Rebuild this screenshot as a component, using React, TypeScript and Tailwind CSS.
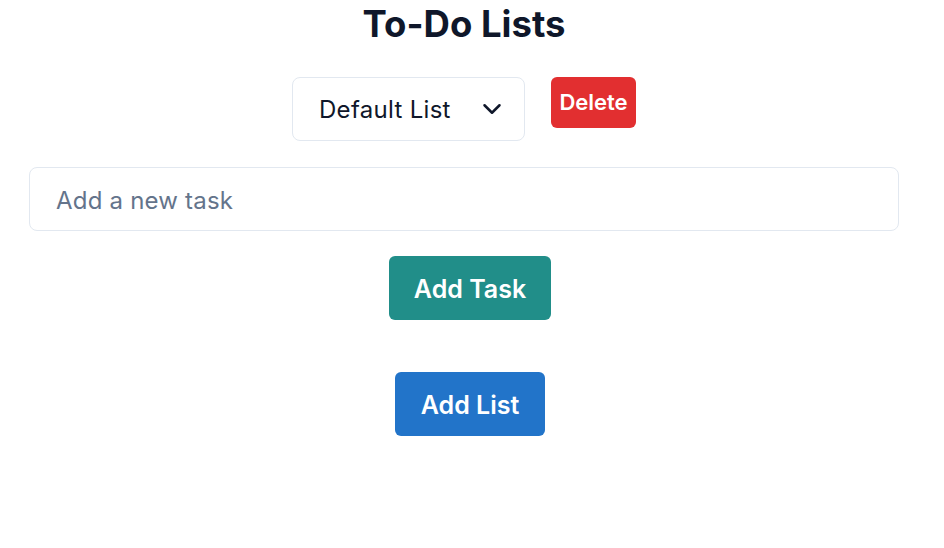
import React from "react";

export default function App() {
  return (
    <div className="w-[928px] h-[548px] bg-white flex flex-col items-center" style={{ fontFamily: "Inter, 'Noto Sans', sans-serif" }}>
      <h1 className="text-[36.5px] leading-[48px] font-bold text-[#0f172a]">To-Do Lists</h1>
      <div className="flex items-start gap-[26px] mt-[29px]">
        <div className="w-[233px] h-[64px] border border-[#e2e8f0] rounded-[8px] flex items-center justify-between pl-[26px] pr-[17px]">
          <span className="text-[24px] tracking-[0.3px] text-[#0f172a] pt-[2px]">Default List</span>
          <svg width="30" height="30" viewBox="0 0 24 24" fill="none" stroke="#0f172a" strokeWidth="2" strokeLinecap="round" strokeLinejoin="round"><path d="M6 9l6 6 6-6" /></svg>
        </div>
        <button className="w-[85px] h-[51px] bg-[#e22f30] rounded-[6px] text-white text-[22px] font-semibold">Delete</button>
      </div>
      <div className="mt-[26px] w-[870px] h-[64px] border border-[#e2e8f0] rounded-[8px] flex items-center pl-[26px]">
        <span className="text-[24px] tracking-[0.2px] text-[#64748b] pt-[3px]">Add a new task</span>
      </div>
      <button className="mt-[25px] ml-[12px] w-[162px] h-[64px] pt-[3px] bg-[#218e89] rounded-[6px] text-white text-[25px] font-semibold">Add Task</button>
      <button className="mt-[52px] ml-[12px] w-[150px] h-[64px] pt-[3px] bg-[#2274c9] rounded-[6px] text-white text-[25px] font-semibold">Add List</button>
    </div>
  );
}
